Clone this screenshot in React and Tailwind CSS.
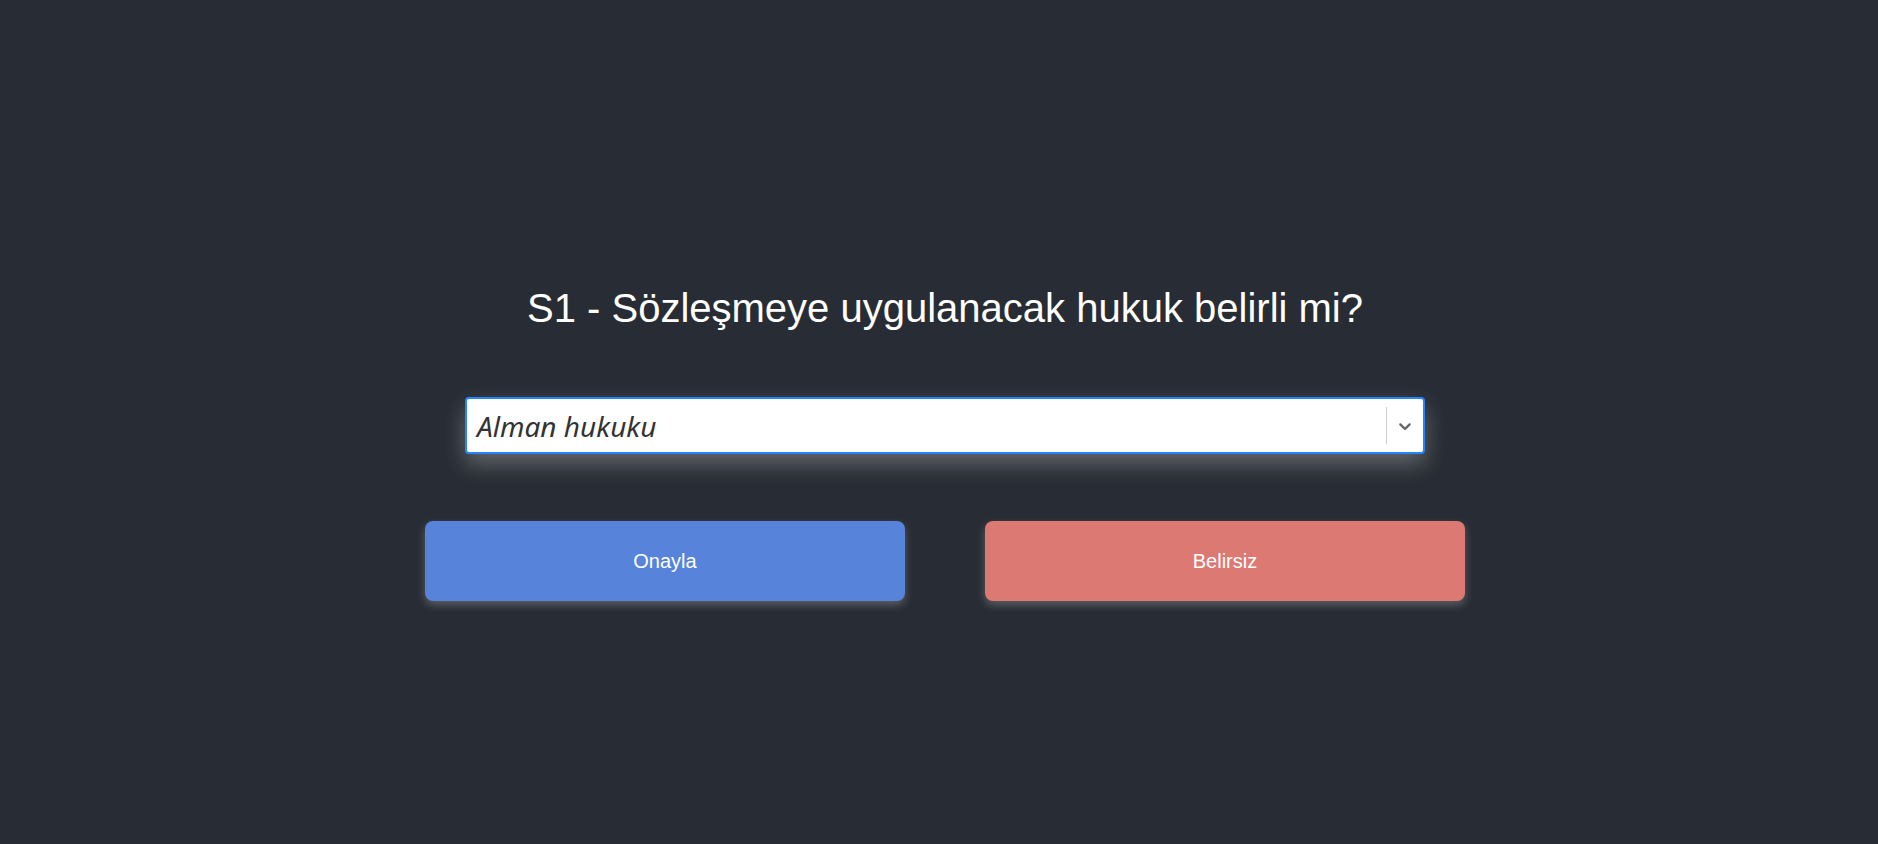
import { useState } from 'react';

// react-select style chevron
function Chevron() {
  return (
    <svg width="20" height="20" viewBox="0 0 20 20" fill="#666666" aria-hidden="true">
      <path d="M4.516 7.548c0.436-0.446 1.043-0.481 1.576 0l3.908 3.747 3.908-3.747c0.533-0.481 1.141-0.446 1.574 0 0.436 0.445 0.408 1.197 0 1.615-0.406 0.418-4.695 4.502-4.695 4.502-0.217 0.223-0.502 0.335-0.787 0.335s-0.57-0.112-0.789-0.335c0 0-4.287-4.084-4.695-4.502s-0.436-1.17 0-1.615z" />
    </svg>
  );
}

export default function App() {
  const [answer] = useState('Alman hukuku');

  return (
    <div className="min-h-screen bg-[#282c34] flex flex-col items-center pt-[285px] pl-[12px] font-['Liberation_Sans',Arial,sans-serif]">
      <h2 className="text-white text-[40px] leading-[46px]">
        S1 - Sözleşmeye uygulanacak hukuk belirli mi?
      </h2>

      {/* Select */}
      <div className="mt-[66px] w-[960px] h-[57px] bg-white border-2 border-[#2684ff] rounded-[4px] flex items-center shadow-[0_10px_22px_rgba(255,255,255,0.28)]">
        <div className="flex-1 pl-[10px] text-[28px] italic text-[#333333] font-['Noto_Sans','Open_Sans',sans-serif] leading-none">
          {answer}
        </div>
        <div className="flex items-center h-full py-[8px]">
          <span className="w-px h-full bg-[#cccccc]" />
          <div className="px-[8px] flex items-center">
            <Chevron />
          </div>
        </div>
      </div>

      {/* Buttons */}
      <div className="mt-[67px] flex gap-[80px]">
        <button className="w-[480px] h-[80px] rounded-[8px] bg-[#5783db] text-white text-[20px] shadow-[0_4px_8px_rgba(255,255,255,0.24)]">
          Onayla
        </button>
        <button className="w-[480px] h-[80px] rounded-[8px] bg-[#dc7973] text-white text-[20px] shadow-[0_4px_8px_rgba(255,255,255,0.24)]">
          Belirsiz
        </button>
      </div>
    </div>
  );
}
